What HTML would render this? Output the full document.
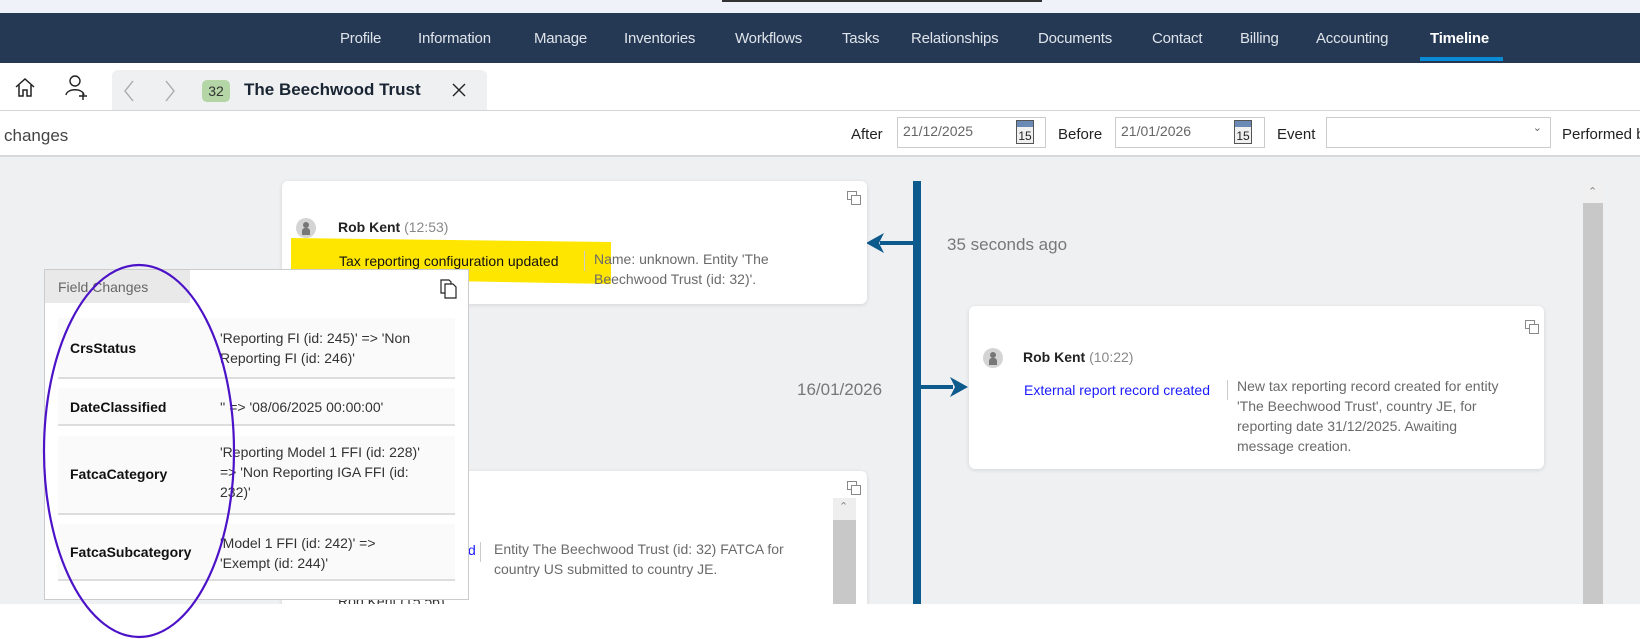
<!DOCTYPE html>
<html><head><meta charset="utf-8"><style>
*{box-sizing:border-box;margin:0;padding:0}
body{width:1640px;height:639px;overflow:hidden;background:#fff;font-family:"Liberation Sans",sans-serif;position:relative;color:#222}
.a{position:absolute;white-space:nowrap}
.top{left:0;top:0;width:1640px;height:13px;background:#eff2f8}
.nav{left:0;top:13px;width:1640px;height:50px;background:#253955}
.nav span{position:absolute;top:17px;font-size:15px;color:#dfe4ea;letter-spacing:-0.2px}
.gray{left:0;top:157px;width:1640px;height:447px;background:#eff0f2}
.card{position:absolute;background:#fff;border-radius:6px;box-shadow:0 1px 4px rgba(0,0,0,.12)}
.desc{color:#6a6a6a;font-size:14px;line-height:20px;white-space:normal}
.av{position:absolute;width:20px;height:20px;border-radius:50%;background:#d4d4d4}
.av:after{content:"";position:absolute;left:7px;top:4px;width:6px;height:6px;border-radius:50%;background:#777}
.av:before{content:"";position:absolute;left:6px;top:10px;width:8px;height:7px;border-radius:3px 3px 0 0;background:#777}
.ic{position:absolute;width:10px;height:9px;border:1.5px solid #888}
.ic:after{content:"";position:absolute;left:3px;top:3px;width:8px;height:8px;border:1.5px solid #888;background:#fff}
.row{position:absolute;left:58px;width:397px;background:#fafafa;border-bottom:2px solid #ddd;font-size:14px}
.row b{position:absolute;left:12px;font-weight:600;color:#111}
.row i{position:absolute;left:162px;font-style:normal;color:#333;line-height:20px;white-space:normal;width:218px}
.inp{position:absolute;height:26px;border:1px solid #ccc;background:#fff;font-size:14px;color:#666;padding:5px 0 0 5px}
.cal{position:absolute;width:18px;height:24px;border:1px solid #555;background:#f0f0f0;font-size:12px;text-align:center;padding-top:8px;color:#222}
.cal:before{content:"";position:absolute;left:0;top:0;width:16px;height:6px;background:#6a8ab5}
</style></head><body>
<div class="a top"></div>
<div class="a" style="left:722px;top:0;width:320px;height:2px;background:#333"></div>
<div class="a nav">
<span style="left:340px">Profile</span><span style="left:418px">Information</span><span style="left:534px">Manage</span><span style="left:624px">Inventories</span><span style="left:735px">Workflows</span><span style="left:842px">Tasks</span><span style="left:911px">Relationships</span><span style="left:1038px">Documents</span><span style="left:1152px">Contact</span><span style="left:1240px">Billing</span><span style="left:1316px">Accounting</span><span style="left:1430px;font-weight:bold;color:#fff">Timeline</span>
<div style="position:absolute;left:1420px;top:44px;width:83px;height:4px;background:#0a8bd6"></div>
</div>
<!-- tabs row -->
<svg class="a" style="left:14px;top:76px" width="22" height="22" viewBox="0 0 22 22" fill="none" stroke="#222" stroke-width="1.5"><path d="M2 11 L11 3 L20 11 M5 9 V20 H9 V14 H13 V20 H17 V9"/></svg>
<svg class="a" style="left:64px;top:74px" width="26" height="26" viewBox="0 0 26 26" fill="none" stroke="#222" stroke-width="1.4"><circle cx="11" cy="7" r="5"/><path d="M2 21 C3 14 19 14 20 21 M19 18 V26 M15 22 H23"/></svg>
<div class="a" style="left:112px;top:70px;width:375px;height:41px;background:#eff0f2;border-radius:6px 6px 0 0"></div>
<svg class="a" style="left:122px;top:80px" width="14" height="22" fill="none" stroke="#aaa" stroke-width="1.4"><path d="M11 1 L3 11 L11 21"/></svg>
<svg class="a" style="left:163px;top:80px" width="14" height="22" fill="none" stroke="#aaa" stroke-width="1.4"><path d="M3 1 L11 11 L3 21"/></svg>
<div class="a" style="left:202px;top:80px;width:28px;height:22px;background:#b4d5a5;border-radius:5px;font-size:14px;text-align:center;padding-top:3px;color:#333">32</div>
<div class="a" style="left:244px;top:80px;font-size:17px;font-weight:600;color:#1a2533">The Beechwood Trust</div>
<svg class="a" style="left:451px;top:82px" width="16" height="16" stroke="#222" stroke-width="1.4"><path d="M2 2 L14 14 M14 2 L2 14"/></svg>
<div class="a" style="left:0;top:110px;width:1640px;height:1px;background:#d5d5d5"></div>
<!-- filter -->
<div class="a" style="left:4px;top:126px;font-size:17px;color:#444">changes</div>
<div class="a" style="left:851px;top:126px;font-size:15px">After</div>
<div class="inp" style="left:897px;top:117px;width:149px;height:31px">21/12/2025</div>
<div class="cal" style="left:1016px;top:120px">15</div>
<div class="a" style="left:1058px;top:126px;font-size:15px">Before</div>
<div class="inp" style="left:1115px;top:117px;width:150px;height:31px">21/01/2026</div>
<div class="cal" style="left:1234px;top:120px">15</div>
<div class="a" style="left:1277px;top:126px;font-size:15px">Event</div>
<div class="inp" style="left:1326px;top:117px;width:225px;height:31px"><span style="position:absolute;right:8px;top:3px;font-size:11px;color:#666">&#8964;</span></div>
<div class="a" style="left:1562px;top:126px;font-size:15px">Performed b</div>
<div class="a" style="left:0;top:155px;width:1640px;height:2px;background:#d8d8d8"></div>
<div class="a gray"></div>
<!-- timeline -->
<div class="a" style="left:913px;top:181px;width:8px;height:423px;background:#0d5a8c"></div>
<div class="a" style="left:880px;top:241px;width:34px;height:4px;background:#0d5a8c"></div>
<svg class="a" style="left:866px;top:233px" width="18" height="20"><path d="M0 10 L18 0 L13 10 L18 20Z" fill="#0d5a8c"/></svg>
<div class="a" style="left:921px;top:385px;width:32px;height:4px;background:#0d5a8c"></div>
<svg class="a" style="left:950px;top:377px" width="18" height="20"><path d="M18 10 L0 0 L5 10 L0 20Z" fill="#0d5a8c"/></svg>
<div class="a" style="left:947px;top:235px;font-size:17px;color:#777">35 seconds ago</div>
<div class="a" style="left:797px;top:380px;font-size:17px;color:#777">16/01/2026</div>
<!-- card1 -->
<div class="card" style="left:282px;top:181px;width:585px;height:123px">
<svg class="a" style="left:9px;top:54px" width="330" height="52"><path d="M0 3 L320 7 L320 49 L0 43Z" fill="#ffe600"/></svg>
<div class="ic" style="left:565px;top:10px"></div>
<div class="av" style="left:14px;top:37px"></div>
<div class="a" style="left:56px;top:38px;font-size:14px;font-weight:600">Rob Kent <span style="font-weight:normal;color:#888">(12:53)</span></div>
<div class="a" style="left:57px;top:72px;font-size:14px;color:#111">Tax reporting configuration updated</div>
<div class="a" style="left:302px;top:70px;width:1px;height:20px;background:#ccc"></div>
<div class="a desc" style="left:312px;top:68px;width:200px">Name: unknown. Entity 'The Beechwood Trust (id: 32)'.</div>
</div>
<!-- card2 -->
<div class="card" style="left:969px;top:306px;width:575px;height:163px">
<div class="ic" style="left:556px;top:14px"></div>
<div class="av" style="left:14px;top:42px"></div>
<div class="a" style="left:54px;top:43px;font-size:14px;font-weight:600">Rob Kent <span style="font-weight:normal;color:#888">(10:22)</span></div>
<div class="a" style="left:55px;top:76px;font-size:14px;color:#1a1aff">External report record created</div>
<div class="a" style="left:258px;top:74px;width:1px;height:20px;background:#ccc"></div>
<div class="a desc" style="left:268px;top:70px;width:275px;line-height:20px">New tax reporting record created for entity 'The Beechwood Trust', country JE, for reporting date 31/12/2025. Awaiting message creation.</div>
</div>
<!-- card3 -->
<div class="card" style="left:282px;top:471px;width:585px;height:150px;border-radius:6px 6px 0 0">
<div class="ic" style="left:565px;top:10px"></div>
<div class="a" style="left:551px;top:27px;width:23px;height:106px;background:#c8c8c8;border-top:22px solid #eee"></div>
<div class="a" style="left:557px;top:29px;font-size:11px;color:#888">&#8963;</div>
<div class="a" style="left:186px;top:71px;font-size:14px;color:#1a1aff">d</div>
<div class="a" style="left:198px;top:71px;width:1px;height:20px;background:#ccc"></div>
<div class="a desc" style="left:212px;top:68px;width:320px">Entity The Beechwood Trust (id: 32) FATCA for country US submitted to country JE.</div>
<div class="a" style="left:56px;top:122px;font-size:14px;color:#333">Rob Kent (15:56)</div>
</div>
<div class="a" style="left:0;top:604px;width:1640px;height:35px;background:#fff"></div>
<!-- page scrollbar -->
<div class="a" style="left:1583px;top:183px;width:20px;height:421px;background:#c8c8c8;border-top:20px solid #f0f0f0"></div>
<div class="a" style="left:1588px;top:185px;font-size:11px;color:#888">&#8963;</div>
<!-- field changes popup -->
<div class="a" style="left:44px;top:269px;width:425px;height:331px;background:#fff;border:1px solid #ccc"></div>
<div class="a" style="left:45px;top:270px;width:145px;height:33px;background:#e9e9e9;font-size:14px;color:#666;padding:9px 0 0 13px">Field Changes</div>
<svg class="a" style="left:440px;top:279px" width="18" height="20" fill="#fff" stroke="#222" stroke-width="1.2"><path d="M1 1 H9 L11 3 V14 H1Z"/><path d="M5 5 H13 L16 8 V19 H5Z"/></svg>
<div class="row" style="top:318px;height:61px"><b style="top:22px">CrsStatus</b><i style="top:10px">'Reporting FI (id: 245)' =&gt; 'Non Reporting FI (id: 246)'</i></div>
<div class="row" style="top:388px;height:38px"><b style="top:11px">DateClassified</b><i style="top:9px">'' =&gt; '08/06/2025 00:00:00'</i></div>
<div class="row" style="top:436px;height:79px"><b style="top:30px">FatcaCategory</b><i style="top:6px;width:205px">'Reporting Model 1 FFI (id: 228)' =&gt; 'Non Reporting IGA FFI (id: 232)'</i></div>
<div class="row" style="top:524px;height:57px"><b style="top:20px">FatcaSubcategory</b><i style="top:9px;width:190px">'Model 1 FFI (id: 242)' =&gt; 'Exempt (id: 244)'</i></div>
<svg class="a" style="left:0;top:250px" width="260" height="389"><ellipse cx="139" cy="201" rx="95" ry="186" fill="none" stroke="#4b12c8" stroke-width="2.2"/></svg>
</body></html>
